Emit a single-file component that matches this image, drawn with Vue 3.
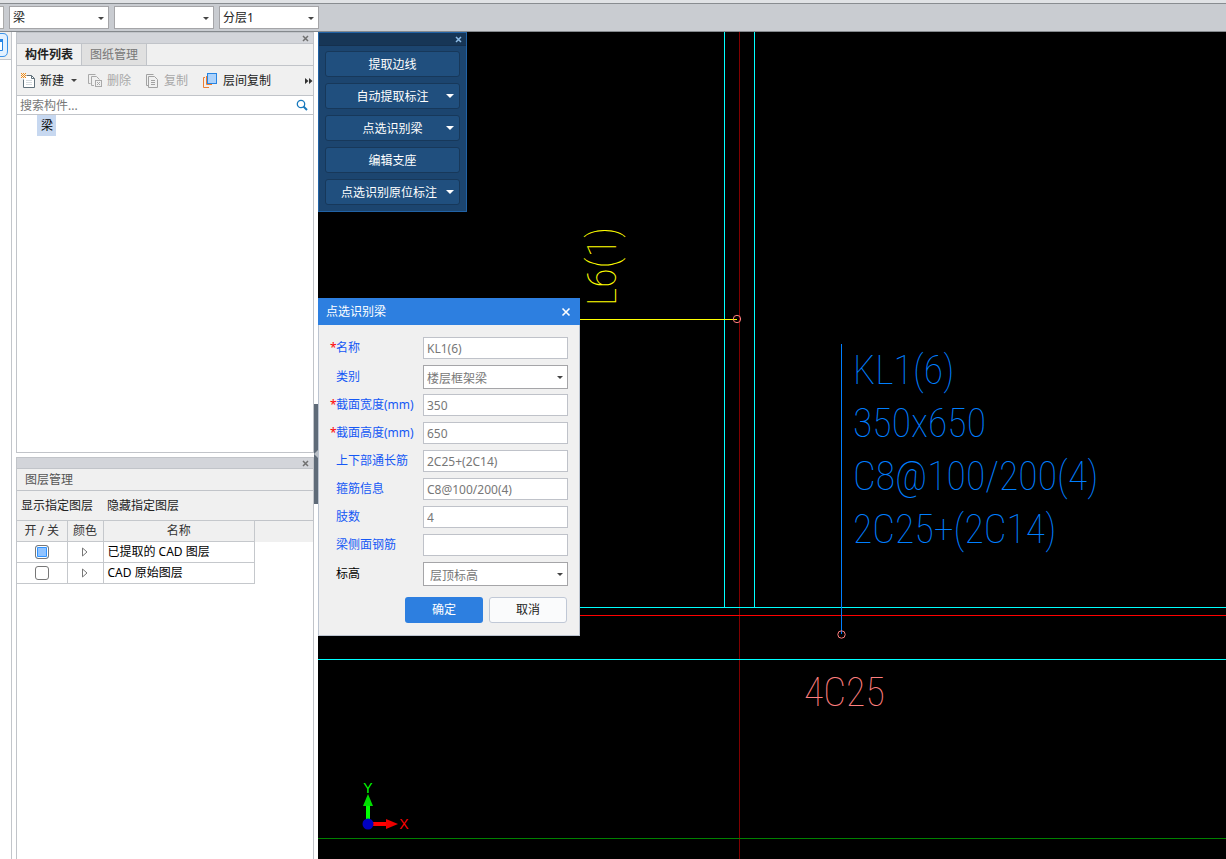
<script setup>
const fields = [
  { id: 'name', label: '名称', value: 'KL1(6)', required: true },
  { id: 'kind', label: '类别', value: '楼层框架梁', select: true },
  { id: 'width', label: '截面宽度(mm)', value: '350', required: true },
  { id: 'height', label: '截面高度(mm)', value: '650', required: true },
  { id: 'through', label: '上下部通长筋', value: '2C25+(2C14)' },
  { id: 'stirrup', label: '箍筋信息', value: 'C8@100/200(4)' },
  { id: 'legs', label: '肢数', value: '4' },
  { id: 'side', label: '梁侧面钢筋', value: '' },
  { id: 'level', label: '标高', value: '层顶标高', select: true, plain: true, indent: true },
]
const actions = [
  { text: '提取边线' },
  { text: '自动提取标注', menu: true },
  { text: '点选识别梁', menu: true },
  { text: '编辑支座' },
  { text: '点选识别原位标注', menu: true },
]
const layers = [
  { name: '已提取的 CAD 图层', on: true },
  { name: 'CAD 原始图层', on: false },
]
const combos = [
  { label: '构件类型', value: '梁' },
  { label: '构件', value: '' },
  { label: '分层', value: '分层1' },
]
const notes = [
  { text: 'KL1(6)', y: 384 },
  { text: '350x650', y: 437 },
  { text: 'C8@100/200(4)', y: 490 },
  { text: '2C25+(2C14)', y: 543 },
]
</script>

<template>
  <div class="app">
    <header class="topbar">
      <span class="stub"></span>
      <span v-for="c in combos" :key="c.label" class="combo top-combo">
        <select :aria-label="c.label"><option>{{ c.value }}</option></select>
      </span>
    </header>
    <div class="body">
      <aside class="rail">
        <div class="rail-head">
          <svg width="8" height="26" viewBox="0 0 8 26">
            <path d="M0 1.500H3Q7.500 1.500 7.500 6V19Q7.500 24.500 3 24.500H0" fill="#e3f1ff" stroke="#3a92e8" />
            <path d="M0 7.500H2.500V18.500H0" fill="#fff" stroke="#2584e4" />
            <rect x="0" y="7" width="3" height="3" fill="#2584e4" />
          </svg>
        </div>
      </aside>
      <div class="side">
        <section class="panel list-panel">
          <div class="strip"><button class="close" aria-label="关闭"><svg width="7" height="7" viewBox="0 0 7 7"><path d="M1 1L6 6M6 1L1 6" stroke="currentColor" stroke-width="1.500" /></svg></button></div>
          <div class="tabs">
            <button class="tab active">构件列表</button>
            <button class="tab">图纸管理</button>
          </div>
          <div class="tools">
            <button class="tool new">
              <svg width="16" height="16" viewBox="0 0 16 16" fill="none">
                <path d="M5.500 2.500H10.500L13.500 5.500V14.500H2.500V6.500" fill="#fff" stroke="#61717b" />
                <path d="M10.500 2.500V5.500H13.500" stroke="#61717b" />
                <path d="M5 7.500H11M5 9.500H11M5 11.500H11" stroke="#d5dade" />
                <path d="M0 0h1v1H0zM2 0h1v1H2zM4 0h1v1H4zM1 1h1v1H1zM3 1h1v1H3zM0 2h1v1H0zM2 2h1v1H2zM4 2h1v1H4zM1 3h1v1H1zM3 3h1v1H3zM0 4h1v1H0zM2 4h1v1H2zM4 4h1v1H4z" fill="#f28a12" />
              </svg>
              <span>新建</span><i class="caret"></i>
            </button>
            <button class="tool del" disabled>
              <svg width="16" height="16" viewBox="0 0 16 16" fill="none" stroke="#a9a9a9">
                <path d="M2.500 10.500H.5V1.500H7.500M6 12.500H3.500V3.500H8.500L11.500 6.500" />
                <rect x="7.500" y="7.500" width="6" height="6" /><path d="M9 9L12 12M12 9L9 12" />
              </svg>
              <span>删除</span>
            </button>
            <button class="tool copy" disabled>
              <svg width="14" height="16" viewBox="0 0 14 16" fill="none" stroke="#a2a2a2">
                <path d="M2.500 12.500H.5V1.500H7.500M2.500 3.500H8.500L11.500 6.500V14.500H2.500ZM5 7.500H9M5 9.500H9M5 11.500H9" />
              </svg>
              <span>复制</span>
            </button>
            <button class="tool">
              <svg width="16" height="17" viewBox="0 0 16 17" fill="none">
                <path d="M2 5.500H.5V15.500H6" stroke="#ed7d31" />
                <path d="M3.500 4V12.500H9" stroke="#ed7d31" />
                <rect x="4.500" y="1.500" width="9" height="10" fill="#acd2fb" stroke="#2684e2" />
              </svg>
              <span class="wide">层间复制</span>
            </button>
            <button class="more" aria-label="更多"><svg width="8" height="6" viewBox="0 0 8 6"><path d="M0 0L3.500 3L0 6ZM4 0L7.500 3L4 6Z" fill="#333" /></svg></button>
          </div>
          <label class="search">
            <input type="text" placeholder="搜索构件..." aria-label="搜索构件" />
            <svg width="12" height="12" viewBox="0 0 12 12" fill="none" stroke="#1879bd"><circle cx="5" cy="5" r="3.700" stroke-width="1.300" /><path d="M7.500 7.500L11 11" stroke-width="2" /></svg>
          </label>
          <div class="tree"><span class="node">梁</span></div>
        </section>
        <section class="panel layer-panel">
          <div class="strip"><button class="close" aria-label="关闭"><svg width="7" height="7" viewBox="0 0 7 7"><path d="M1 1L6 6M6 1L1 6" stroke="currentColor" stroke-width="1.500" /></svg></button></div>
          <h2>图层管理</h2>
          <div class="links"><button>显示指定图层</button><button>隐藏指定图层</button></div>
          <div class="table-wrap">
            <table>
              <thead><tr><th class="c1">开 / 关</th><th class="c2">颜色</th><th class="c3">名称</th></tr></thead>
              <tbody>
                <tr v-for="l in layers" :key="l.name">
                  <td><input type="checkbox" :checked="l.on" :aria-label="l.name" /></td>
                  <td><svg width="6" height="10" viewBox="0 0 6 10"><path d="M.5 1L5 5L.5 9Z" fill="#fff" stroke="#777" /></svg></td>
                  <td>{{ l.name }}</td>
                </tr>
              </tbody>
            </table>
          </div>
        </section>
      </div>
      <div class="gutter"><div class="grip"><svg width="4" height="8" viewBox="0 0 4 8"><path d="M4 0V8L0 4Z" fill="#b9bfc6" /></svg></div></div>
      <main class="canvas">
        <svg class="drawing" viewBox="318 32 908 827" preserveAspectRatio="xMinYMin slice" fill="none">
          <g shape-rendering="crispEdges">
            <path d="M739.500 32V859" stroke="#800000" />
            <path d="M724.500 32V607M754.500 32V607M318 607.500H1226M318 659.500H1226" stroke="#0ff" />
            <path d="M318 615.500H1226" stroke="#f00" />
            <path d="M318 838.500H1226" stroke="#008000" />
            <path d="M318 319.500H737" stroke="#ff0" />
            <path d="M841.500 344V634" stroke="#007fff" />
          </g>
          <circle cx="737" cy="319" r="3.700" stroke="#ff7f7f" />
          <circle cx="841.500" cy="634.500" r="3.700" stroke="#ff7f7f" />
          <text v-for="n in notes" :key="n.text" class="cad note" x="853" :y="n.y">{{ n.text }}</text>
          <text class="cad bottom" x="804" y="706">4C25</text>
          <text class="cad beam" transform="translate(616 306) rotate(-90)">L6(1)</text>
          <path d="M368 824V804" stroke="#0f0" stroke-width="4" />
          <path d="M363 806L368 794L373 806Z" fill="#0d0" />
          <path d="M368 824H387" stroke="#f00" stroke-width="4" />
          <path d="M386 819L398 824L386 829Z" fill="#e00" />
          <circle cx="368" cy="824" r="5.500" fill="#0000c0" />
          <text class="axis y" x="368" y="793">Y</text>
          <text class="axis x" x="404" y="829">X</text>
        </svg>
        <nav class="palette">
          <div class="palette-head"><button class="close" aria-label="关闭"><svg width="7" height="7" viewBox="0 0 7 7"><path d="M1 1L6 6M6 1L1 6" stroke="currentColor" stroke-width="1.500" /></svg></button></div>
          <div class="palette-body">
            <button v-for="a in actions" :key="a.text" :class="{ menu: a.menu }"><span>{{ a.text }}</span><i v-if="a.menu"></i></button>
          </div>
        </nav>
        <form class="dialog" @submit.prevent>
          <header><span>点选识别梁</span><button type="button" aria-label="关闭"><svg width="10" height="10" viewBox="0 0 10 10"><path d="M1.500 1.500L8.500 8.500M8.500 1.500L1.500 8.500" stroke="#fff" stroke-width="1.600" /></svg></button></header>
          <div class="fields">
            <div v-for="f in fields" :key="f.id" class="row" :class="{ tall: f.select }">
              <label :for="f.id" :class="{ plain: f.plain }"><b>{{ f.required ? '*' : '' }}</b>{{ f.label }}</label>
              <span v-if="f.select" class="combo" :class="{ indent: f.indent }"><select :id="f.id"><option>{{ f.value }}</option></select></span>
              <input v-else :id="f.id" type="text" :value="f.value" />
            </div>
          </div>
          <footer><button class="ok">确定</button><button type="button" class="cancel">取消</button></footer>
        </form>
      </main>
    </div>
  </div>
</template>

<style>
body { margin: 0; overflow: hidden; }
</style>
<style scoped>
* { box-sizing: border-box; }
.app { height: 100vh; display: flex; flex-direction: column; font: 12px/16px "Noto Sans", "Noto Sans CJK SC", sans-serif; color: #222; background: #fff; overflow: hidden; }
button, input, select { font: inherit; color: inherit; margin: 0; padding: 0; border: 0; background: none; }
svg { display: block; flex: none; }
.topbar { height: 32px; flex: none; display: flex; align-items: center; gap: 5px; padding-top: 4px; background: #c9ccd1; border-bottom: 1px solid #85898d; position: relative; }
.topbar::before { content: ""; position: absolute; inset: 0 0 auto; height: 3px; background: #e0e2e5; border-bottom: 1px solid #888c90; }
.stub { width: 4px; height: 23px; background: #fff; border: 1px solid #aaa; border-left: 0; }
.combo { position: relative; display: flex; }
.combo select { width: 100%; height: 100%; appearance: none; background: #fff; border: 1px solid #a5a5a8; padding: 1px 0 0 3px; outline: 0; }
.combo::after { content: ""; position: absolute; right: 5px; top: 50%; margin-top: -1px; border: 3px solid transparent; border-top-color: #444; border-bottom: 0; }
.top-combo { width: 100px; height: 23px; }
.body { flex: 1; min-height: 0; display: flex; }
.rail { width: 12px; flex: none; border-right: 1px solid #c3c6cb; margin-right: 4px; }
.rail-head { height: 28px; background: #f0f0f0; border-bottom: 1px solid #c3c6cb; }
.side { width: 298px; flex: none; display: flex; flex-direction: column; gap: 4px; }
.panel { border: 1px solid #c1c4c9; display: flex; flex-direction: column; }
.list-panel { height: 421px; flex: none; }
.layer-panel { flex: 1; border-bottom: 0; }
.strip { height: 11px; flex: none; display: flex; justify-content: flex-end; align-items: center; background: #d3d5da; border-bottom: 1px solid #c1c4c9; padding-right: 4px; }
.close { color: #707070; display: block; }
.tabs { height: 22px; flex: none; display: flex; background: #f0f0f0; border-bottom: 1px solid #c1c4c9; }
.tab { width: 65px; border-right: 1px solid #c1c4c9; background: #e0e0e0; color: #777; }
.tab.active { background: #f0f0f0; color: #222; font-weight: 700; }
.tools { height: 30px; flex: none; display: flex; align-items: center; background: #f0f0f0; border-bottom: 1px solid #c1c4c9; padding-left: 4px; }
.tool { display: flex; align-items: center; gap: 3px; }
.tool:disabled { color: #a8a8a8; }
.new { margin-right: 11px; }
.del { margin-right: 15px; }
.copy { margin-right: 15px; gap: 4px; }
.wide { margin-left: 1px; }
.caret { margin-left: 4px; border: 3px solid transparent; border-top-color: #444; border-bottom: 0; }
.more { margin-left: auto; }
.search { height: 19px; flex: none; display: flex; align-items: center; border-bottom: 1px solid #c1c4c9; padding: 0 5px 0 3px; }
.search input { flex: 1; min-width: 0; outline: 0; padding-top: 2px; }
.search input::placeholder { color: #777; opacity: 1; }
.tree { padding-left: 20px; }
.node { display: inline-block; padding: 3px 3px 2px 4px; background: #c7d8f0; color: #000; }
h2 { margin: 0; height: 22px; flex: none; font: inherit; line-height: 21px; padding-left: 8px; background: #f0f0f0; border-bottom: 1px solid #c1c4c9; color: #555; }
.links { height: 30px; flex: none; display: flex; gap: 14px; padding-left: 4px; background: #f0f0f0; border-bottom: 1px solid #c1c4c9; }
.table-wrap { background: linear-gradient(#f0f0f0 21px, #fff 21px); }
table { border-collapse: collapse; table-layout: fixed; width: 238px; margin-top: -1px; }
th { font-weight: 400; height: 21px; padding: 0; color: #333; background: #f0f0f0; }
td { height: 21px; padding: 0 4px; color: #000; }
th, td { border: 1px solid #c5c8cc; }
th:first-child, td:first-child { border-left: 0; }
.c1 { width: 50px; } .c2 { width: 36px; }
td svg, td input { margin: 0 auto; display: block; }
td input { appearance: none; width: 14px; height: 14px; border: 1px solid #777; border-radius: 3px; background: #fff; }
td input:checked { background: #90c3ff; box-shadow: inset 0 0 0 1px #fff, inset 0 0 0 2px #3093ff; }
.gutter { width: 4px; flex: none; padding-top: 372px; }
.grip { height: 100px; background: #5f6b78; display: flex; align-items: center; }
.canvas { flex: 1; min-width: 0; position: relative; background: #000; overflow: hidden; }
.drawing { position: absolute; inset: 0; width: 100%; height: 100%; }
.cad { font-family: "Roboto Condensed", "Liberation Sans Narrow", Roboto, sans-serif; font-weight: 100; font-size: 40px; }
.note { fill: #007fff; }
.bottom { fill: #ff7f7f; }
.beam { fill: #ff0; }
.axis { font-family: "Liberation Sans", sans-serif; font-size: 14px; text-anchor: middle; }
.axis.y { fill: #0f0; } .axis.x { fill: #f00; }
.palette { position: absolute; left: 0; top: 0; width: 149px; background: #1c456f; border: 1px solid #2162a5; }
.palette-head { height: 13px; background: #173656; border-bottom: 1px solid #15304d; display: flex; justify-content: flex-end; align-items: center; padding-right: 4px; }
.palette-head .close { color: #8dbbe5; }
.palette-body { padding: 5px 6px 6px; display: flex; flex-direction: column; gap: 6px; }
.palette-body button { height: 26px; padding-top: 2px; display: grid; grid-template-columns: 1fr auto minmax(22px, 1fr); align-items: center; position: relative; color: #fff; background: #204f7e; border: 1px solid #17385a; border-radius: 3px; }
.palette-body span { grid-column: 2; }
.palette-body i { position: absolute; right: 5px; top: 10px; border: 4px solid transparent; border-top-color: #fff; border-bottom: 0; }
.dialog { position: absolute; left: 0; top: 266px; width: 262px; background: #f0f0f0; border: 1px solid #bcc4d0; border-top: 0; }
.dialog header { height: 27px; margin: 0 -1px; padding: 0 9px 0 8px; display: flex; align-items: center; justify-content: space-between; background: #2d7fe0; color: #fff; }
.fields { padding: 12px 11px 0; display: flex; flex-direction: column; gap: 6px; }
.row { height: 22px; display: flex; align-items: center; }
.row.tall { height: 23px; align-items: flex-start; line-height: 24px; }
.row label { width: 93px; flex: none; color: #1558f5; white-space: nowrap; }
.row label.plain { color: #000; }
.row b { display: inline-block; width: 6px; font-weight: 400; color: red; }
.row input, .row .combo { flex: 1; min-width: 0; color: #777; }
.row .combo { height: 24px; }
.row input { height: 22px; background: #fff; border: 1px solid #bfc2c9; padding: 1px 3px 0; }
.row .indent select { padding-left: 6px; }
footer { display: flex; justify-content: flex-end; gap: 6px; padding: 12px 12px 12px; }
footer button { width: 78px; height: 26px; border-radius: 3px; }
.ok { background: #2d7fe0; color: #fff; }
.cancel { background: #fafbfc; border: 1px solid #c0c8d6; }
</style>
